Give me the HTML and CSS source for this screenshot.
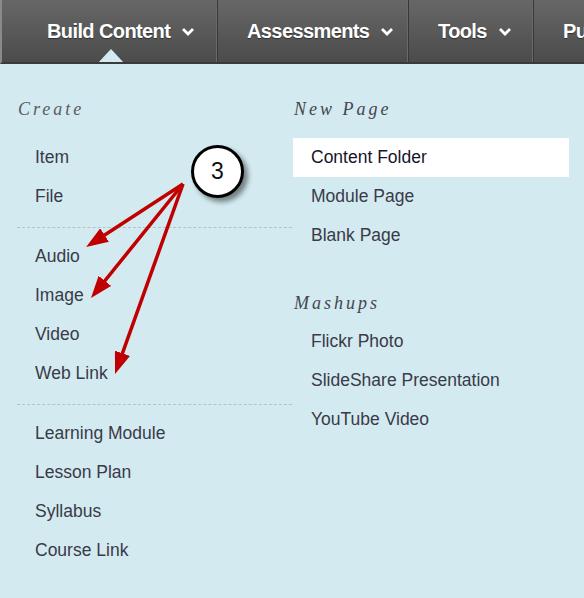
FILE: index.html
```html
<!DOCTYPE html>
<html>
<head>
<meta charset="utf-8">
<link rel="stylesheet" href="styles.css">
</head>
<body>
<nav class="tabs">
  <div class="tab tab-first"><span>Build Content</span><svg class="chev" width="14" height="10" viewBox="0 0 14 10"><polyline points="2,2 7,7 12,2" fill="none" stroke="#fff" stroke-width="2.8"/></svg></div>
  <div class="tab tab-assess"><span>Assessments</span><svg class="chev" width="14" height="10" viewBox="0 0 14 10"><polyline points="2,2 7,7 12,2" fill="none" stroke="#fff" stroke-width="2.8"/></svg></div>
  <div class="tab tab-tools"><span>Tools</span><svg class="chev" width="14" height="10" viewBox="0 0 14 10"><polyline points="2,2 7,7 12,2" fill="none" stroke="#fff" stroke-width="2.8"/></svg></div>
  <div class="tab tab-last"><span>Pu</span></div>
</nav>
<main class="menu">
  <section class="col">
    <h2 class="heading">Create</h2>
    <div class="item">Item</div>
    <div class="item">File</div>
    <div class="sep"></div>
    <div class="item">Audio</div>
    <div class="item">Image</div>
    <div class="item">Video</div>
    <div class="item">Web Link</div>
    <div class="sep"></div>
    <div class="item">Learning Module</div>
    <div class="item">Lesson Plan</div>
    <div class="item">Syllabus</div>
    <div class="item">Course Link</div>
  </section>
  <section class="col">
    <h2 class="heading heading-dark">New Page</h2>
    <div class="item active">Content Folder</div>
    <div class="item">Module Page</div>
    <div class="item">Blank Page</div>
    <h2 class="heading heading-dark heading-second">Mashups</h2>
    <div class="item">Flickr Photo</div>
    <div class="item">SlideShare Presentation</div>
    <div class="item">YouTube Video</div>
  </section>
</main>
<svg class="arrows" width="584" height="598" viewBox="0 0 584 598">
  <defs>
    <marker id="ah" markerUnits="userSpaceOnUse" markerWidth="22" markerHeight="16" refX="15" refY="8" orient="auto">
      <path d="M0,0 L22,8 L0,16 z" fill="#c00000"/>
    </marker>
  </defs>
  <line x1="183" y1="184" x2="92" y2="243.2" stroke="#c00000" stroke-width="3.5" marker-end="url(#ah)"/>
  <line x1="183" y1="184" x2="95.4" y2="292.5" stroke="#c00000" stroke-width="3.5" marker-end="url(#ah)"/>
  <line x1="183" y1="184" x2="117.4" y2="367.4" stroke="#c00000" stroke-width="3.5" marker-end="url(#ah)"/>
</svg>
<div class="callout">3</div>
</body>
</html>
```
FILE: styles.css
```css
html, body {
  margin: 0;
  padding: 0;
  background: #d3eaf0;
}
body {
  font-family: "Liberation Sans", Arial, sans-serif;
  width: 584px;
  height: 598px;
  overflow: hidden;
  position: relative;
}
.tabs {
  display: flex;
  height: 62px;
  background: linear-gradient(#676767, #4b4b4b);
  border-bottom: 2px solid #3a3a3a;
  border-left: 2px solid #8a8a8a;
  white-space: nowrap;
  overflow: hidden;
}
.tab {
  position: relative;
  flex: none;
  box-sizing: border-box;
  display: flex;
  align-items: center;
  gap: 11px;
  padding-left: 29px;
  padding-top: 1px;
  color: #fff;
  font-weight: bold;
  font-size: 20px;
  letter-spacing: -0.6px;
  text-shadow: 0 1px 1px rgba(0, 0, 0, 0.45);
  border-right: 1px solid #383838;
  box-shadow: inset -1px 0 0 #6a6a6a;
}
.tab-first {
  width: 216px;
  padding-left: 45px;
}
.tab-first::after {
  content: "";
  position: absolute;
  left: 95px;
  bottom: -2px;
  width: 0;
  height: 0;
  border-left: 14px solid transparent;
  border-right: 14px solid transparent;
  border-bottom: 15px solid #d3eaf0;
}
.tab-assess { width: 191px; }
.tab-tools { width: 125px; }
.tab-last { border-right: none; box-shadow: none; }
.chev { display: block; margin-top: 1px; }

.menu {
  display: grid;
  grid-template-columns: 273px 276px;
  column-gap: 3px;
  padding: 33px 0 0 17px;
}
.heading {
  margin: 0 0 17px 1px;
  font-family: "Liberation Serif", "Times New Roman", serif;
  font-style: italic;
  font-weight: normal;
  font-size: 18px;
  letter-spacing: 3px;
  line-height: 24px;
  color: #5c5c66;
}
.heading-dark {
  color: #45454f;
}
.heading-second {
  margin-top: 36px;
  margin-bottom: 7px;
}
.item {
  height: 39px;
  line-height: 39px;
  padding-left: 18px;
  font-size: 17.5px;
  color: #3a3a48;
}
.item.active {
  background: #fff;
  color: #15152a;
}
.sep {
  border-top: 1px dashed #b2c4c9;
  margin: 11px -2px 9px 0;
}
.arrows {
  position: absolute;
  left: 0;
  top: 0;
  pointer-events: none;
}
.callout {
  position: absolute;
  left: 191px;
  top: 145px;
  width: 53px;
  height: 53px;
  box-sizing: border-box;
  border: 3px solid #000;
  border-radius: 50%;
  background: #fff;
  box-shadow: 4px 4px 5px rgba(0, 0, 0, 0.45);
  font-size: 23px;
  line-height: 47px;
  text-align: center;
  color: #111;
}
```
